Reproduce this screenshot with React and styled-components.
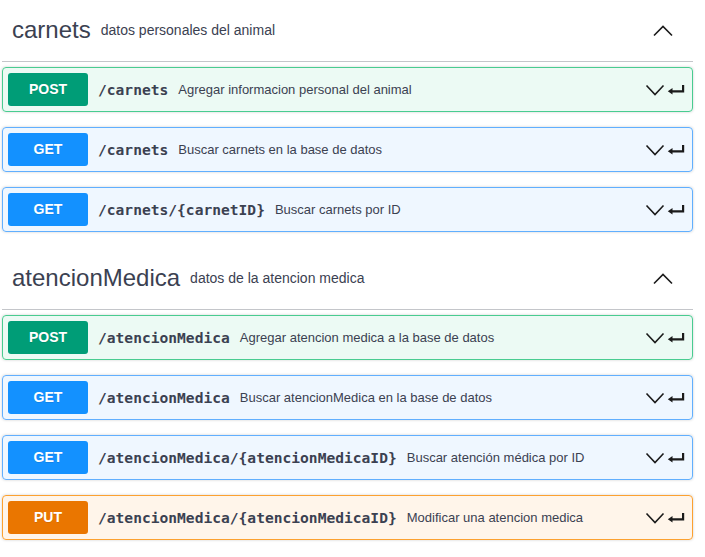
import React from "react";
import styled, { createGlobalStyle } from "styled-components";

const GlobalStyle = createGlobalStyle`
  html, body { margin: 0; padding: 0; background: #ffffff; }
  body { font-family: "Liberation Sans", Arial, sans-serif; }
`;

const METHODS = {
  post: { border: "#49cc90", bg: "rgba(73, 204, 144, 0.1)", badge: "#009d77" },
  get: { border: "#61affe", bg: "rgba(97, 175, 254, 0.1)", badge: "#1391ff" },
  put: { border: "#fca130", bg: "rgba(252, 161, 48, 0.1)", badge: "#ea7600" },
};

const Page = styled.div`
  padding: 0 12px 0 2px;
`;

const TagSection = styled.section`
  display: flex;
  flex-direction: column;
  & + & {
    margin-top: 1px;
  }
`;

const TagHeading = styled.h3`
  display: flex;
  align-items: center;
  box-sizing: border-box;
  height: 62px;
  margin: 0 0 5px;
  padding: 10px 20px 10px 10px;
  border-bottom: 1px solid rgba(59, 65, 81, 0.3);
  font-family: "Liberation Sans", Arial, sans-serif;
  font-size: 24px;
  font-weight: 400;
  color: #3b4151;
`;

const TagName = styled.span`
  position: relative;
  top: -1px;
`;

const TagDescription = styled.small`
  flex: 1;
  padding: 0 10px;
  font-size: 14px;
  color: #3b4151;
  position: relative;
  top: -1px;
`;

const IconButton = styled.span`
  display: flex;
  align-items: center;
  justify-content: center;
  width: 20px;
  height: 20px;
  color: #1b1b1b;
`;

const OpBlock = styled.div`
  margin: 0 0 15px;
  border: 1px solid ${(p) => METHODS[p.$method].border};
  border-radius: 4px;
  background: ${(p) => METHODS[p.$method].bg};
  box-shadow: 0 0 3px rgba(0, 0, 0, 0.19);
`;

const Summary = styled.div`
  display: flex;
  align-items: center;
  padding: 5px;
`;

const MethodBadge = styled.span`
  min-width: 80px;
  padding: 6px 0;
  line-height: 21px;
  border-radius: 3px;
  background: ${(p) => METHODS[p.$method].badge};
  color: #ffffff;
  font-family: "Liberation Sans", Arial, sans-serif;
  font-size: 14px;
  font-weight: 700;
  text-align: center;
  text-shadow: 0 1px 0 rgba(0, 0, 0, 0.1);
`;

const PathText = styled.span`
  padding: 0 10px;
  font-family: "DejaVu Sans Mono", "Liberation Mono", monospace;
  font-size: 14.6px;
  font-weight: 700;
  color: #3b4151;
  white-space: nowrap;
`;

const OpDescription = styled.span`
  flex: 1;
  font-family: "Liberation Sans", Arial, sans-serif;
  font-size: 13px;
  color: #3b4151;
  white-space: nowrap;
`;

const Controls = styled.div`
  display: flex;
  align-items: center;
  gap: 1px;
  margin-right: 1px;
`;

const ChevronUp = () => (
  <svg width="20" height="20" viewBox="0 0 20 20" fill="none">
    <polyline points="1,14.5 10,5.5 19,14.5" stroke="currentColor" strokeWidth="1.6" />
  </svg>
);

const ChevronDown = () => (
  <svg width="20" height="20" viewBox="0 0 20 20" fill="none">
    <polyline points="1.5,5.5 10,14.5 18.5,5.5" stroke="currentColor" strokeWidth="1.6" />
  </svg>
);

const ReturnIcon = () => (
  <svg width="20" height="20" viewBox="0 0 20 20" fill="currentColor">
    <path d="M16 5h2.2v7.4H6.5v2.2L1.8 11.3 6.5 8v2.2H16z" />
  </svg>
);

const sections = [
  {
    name: "carnets",
    description: "datos personales del animal",
    ops: [
      { method: "post", path: "/carnets", summary: "Agregar informacion personal del animal" },
      { method: "get", path: "/carnets", summary: "Buscar carnets en la base de datos" },
      { method: "get", path: "/carnets/{carnetID}", summary: "Buscar carnets por ID" },
    ],
  },
  {
    name: "atencionMedica",
    description: "datos de la atencion medica",
    ops: [
      { method: "post", path: "/atencionMedica", summary: "Agregar atencion medica a la base de datos" },
      { method: "get", path: "/atencionMedica", summary: "Buscar atencionMedica en la base de datos" },
      { method: "get", path: "/atencionMedica/{atencionMedicaID}", summary: "Buscar atención médica por ID" },
      { method: "put", path: "/atencionMedica/{atencionMedicaID}", summary: "Modificar una atencion medica" },
    ],
  },
];

export default function App() {
  return (
    <>
      <GlobalStyle />
      <Page>
        {sections.map((s) => (
          <TagSection key={s.name}>
            <TagHeading>
              <TagName>{s.name}</TagName>
              <TagDescription>{s.description}</TagDescription>
              <IconButton>
                <ChevronUp />
              </IconButton>
            </TagHeading>
            {s.ops.map((op, i) => (
              <OpBlock key={i} $method={op.method}>
                <Summary>
                  <MethodBadge $method={op.method}>{op.method.toUpperCase()}</MethodBadge>
                  <PathText>{op.path}</PathText>
                  <OpDescription>{op.summary}</OpDescription>
                  <Controls>
                    <IconButton>
                      <ChevronDown />
                    </IconButton>
                    <IconButton>
                      <ReturnIcon />
                    </IconButton>
                  </Controls>
                </Summary>
              </OpBlock>
            ))}
          </TagSection>
        ))}
      </Page>
    </>
  );
}
